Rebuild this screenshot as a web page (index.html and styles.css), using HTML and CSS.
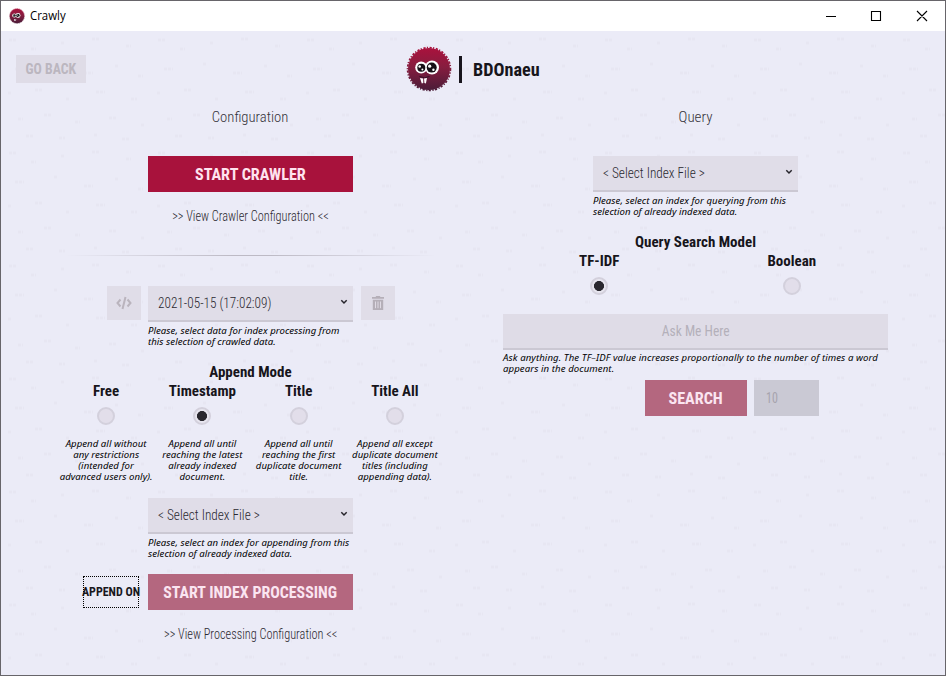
FILE: index.html
```html
<!DOCTYPE html>
<html lang="en">
<head>
<meta charset="utf-8">
<title>Crawly</title>
<link rel="stylesheet" href="styles.css">
</head>
<body>
<svg class="defs" width="0" height="0" aria-hidden="true">
  <defs>
    <linearGradient id="fur" x1="0" y1="0" x2="0" y2="1"><stop offset="0" stop-color="#aa123d"/><stop offset=".45" stop-color="#871d3f"/><stop offset="1" stop-color="#4b1c38"/></linearGradient>
    <symbol id="crawly" viewBox="0 0 46 46">
      <circle cx="23" cy="23" r="21" fill="url(#fur)"/>
      <circle cx="23" cy="23" r="21.4" fill="none" stroke="url(#fur)" stroke-width="1.8" stroke-dasharray="2.2 1.3 1.2 1.6"/>
      <circle cx="15.2" cy="21.5" r="6" fill="#fff"/><circle cx="26" cy="21.5" r="7" fill="#fff"/>
      <circle cx="15.3" cy="21.8" r="4" fill="#151016"/><circle cx="25.7" cy="21.6" r="5" fill="#151016"/>
      <circle cx="13.7" cy="20.5" r="1.3" fill="#fff"/><circle cx="16.4" cy="23.6" r="1" fill="#fff"/>
      <circle cx="23.7" cy="20.2" r="1.6" fill="#fff"/><circle cx="27.4" cy="23.7" r="1.2" fill="#fff"/>
      <path d="M13.5 30.5q5 2.500 10 0" fill="none" stroke="#351126" stroke-width="1"/>
      <path d="M14 32l3.200.4.1 4.600-1.500.5zM18 32.400l3-.4-1.100 5.400-1.500-.5z" fill="#fff"/>
    </symbol>
    <symbol id="chevron" viewBox="0 0 8 6"><path d="M1.300 1.300L4 4l2.700-2.700" fill="none" stroke="#26242b" stroke-width="1.500"/></symbol>
  </defs>
</svg>
<div class="window">
  <header class="titlebar">
    <svg class="app-icon"><use href="#crawly"/></svg>
    <span class="app-name">Crawly</span>
    <svg class="controls" viewBox="0 0 104 12"><path d="M0 6.500h10M45.500 1.500h9v9h-9zM91 1l10 10M101 1L91 11" fill="none" stroke="#000" stroke-width="1.100"/></svg>
  </header>
  <main class="app">
    <div class="top">
      <button class="back"><span>GO BACK</span></button>
      <div class="brand"><svg class="logo"><use href="#crawly"/></svg><i class="bar"></i><span class="brand-name">BDOnaeu</span></div>
    </div>
    <div class="columns">
      <section class="col">
        <h2><span class="t-config">Configuration</span></h2>
        <button class="primary"><span class="t-start">START CRAWLER</span></button>
        <a class="link"><span>&gt;&gt; View Crawler Configuration &lt;&lt;</span></a>
        <hr>
        <div class="data-row">
          <button class="icon-btn"><svg width="16" height="14" viewBox="0 0 16 14" fill="none" stroke="#bab4bd" stroke-width="2"><path d="M4.500 3.500L1.500 7l3 3.500M11.500 3.500l3 3.500-3 3.500M9.500 1l-3 12"/></svg></button>
          <div class="select"><span class="t-date">2021-05-15 (17:02:09)</span><svg class="chev"><use href="#chevron"/></svg></div>
          <button class="icon-btn"><svg width="12" height="14" viewBox="0 0 12 14"><path d="M0 1h3.500l.7-1h3.600l.7 1H12v1.700H0zM.8 3.700h10.400V14H.8z" fill="#b5afb8"/><path d="M3.500 5.500v6.700M6 5.500v6.700M8.500 5.500v6.700" stroke="#dfdae4"/></svg></button>
        </div>
        <p class="hint">Please, select data for index processing from<br>this selection of crawled data.</p>
        <h3><span>Append Mode</span></h3>
        <div class="radios">
          <div class="radio"><b>Free</b><i class="dot"></i><p>Append all without<br>any restrictions<br>(intended for<br>advanced users only).</p></div>
          <div class="radio"><b>Timestamp</b><i class="dot on"></i><p>Append all until<br>reaching the latest<br>already indexed<br>document.</p></div>
          <div class="radio"><b>Title</b><i class="dot"></i><p>Append all until<br>reaching the first<br>duplicate document<br>title.</p></div>
          <div class="radio"><b>Title All</b><i class="dot"></i><p>Append all except<br>duplicate document<br>titles (including<br>appending data).</p></div>
        </div>
        <div class="select"><span class="t-select">&lt; Select Index File &gt;</span><svg class="chev"><use href="#chevron"/></svg></div>
        <p class="hint">Please, select an index for appending from this<br>selection of already indexed data.</p>
        <div class="process-row">
          <button class="append"><span>APPEND ON</span></button>
          <button class="primary disabled"><span class="t-process">START INDEX PROCESSING</span></button>
        </div>
        <a class="link"><span>&gt;&gt; View Processing Configuration &lt;&lt;</span></a>
      </section>
      <section class="col">
        <h2><span>Query</span></h2>
        <div class="select"><span class="t-select">&lt; Select Index File &gt;</span><svg class="chev"><use href="#chevron"/></svg></div>
        <p class="hint">Please, select an index for querying from this<br>selection of already indexed data.</p>
        <h3><span>Query Search Model</span></h3>
        <div class="radios two">
          <div class="radio"><b>TF-IDF</b><i class="dot on"></i></div>
          <div class="radio"><b>Boolean</b><i class="dot"></i></div>
        </div>
        <div class="ask"><span class="t-ask">Ask Me Here</span></div>
        <p class="hint wide">Ask anything. The TF–IDF value increases proportionally to the number of times a word<br>appears in the document.</p>
        <div class="search-row">
          <button class="primary disabled search"><span class="t-search">SEARCH</span></button>
          <div class="count"><span class="t-count">10</span></div>
        </div>
      </section>
    </div>
  </main>
</div>
</body>
</html>
```

FILE: styles.css
```css
* { box-sizing: border-box; }
body { margin: 0; width: 946px; height: 676px; overflow: hidden; font-family: Roboto, "Liberation Sans", sans-serif; font-stretch: 75%; color: #17151b; }
.defs { position: absolute; }
span { display: inline-block; white-space: nowrap; }
button { border: 0; padding: 0; font: inherit; display: flex; align-items: center; justify-content: center; flex: none; }
h2, h3, p { margin: 0; }
.window { width: 946px; height: 676px; border: 1px solid #67656a; background: #fff; display: flex; flex-direction: column; }
.titlebar { height: 30px; flex: none; display: flex; align-items: center; padding: 0 17px 0 8px; }
.app-icon { width: 16px; height: 16px; }
.app-name { margin-left: 5px; font: 12px/16px "Open Sans", sans-serif; color: #000; transform: scaleX(.95); transform-origin: left; }
.controls { width: 104px; height: 12px; margin-left: auto; margin-right: -2px; }
.app {
  flex: 1; display: flex; flex-direction: column; background-color: #ebebf7;
  background-image: url("data:image/svg+xml,%3Csvg xmlns='http://www.w3.org/2000/svg' width='149' height='113'%3E%3Cpath d='M8 9h8M30 18h5M60 12h3M91 8h8M125 15h5M14 38h9M53 33h4M83 42h9M114 35h4M137 45h5M7 62h3M34 59h8M65 68h4M95 61h9M130 68h6M17 88h5M43 84h8M74 91h5M108 87h7M140 94h4M25 105h8M58 107h6M93 104h3M121 108h8' stroke='%23e0deea' stroke-width='3' opacity='.4' stroke-dasharray='3 1'/%3E%3C/svg%3E");
}
.top { height: 76px; flex: none; display: grid; grid-template-columns: 1fr auto 1fr; align-items: center; padding: 0 1px 0 15px; }
.back { width: 70px; height: 28px; background: #dfdce7; color: #bbb6bf; font-weight: 700; font-size: 14px; }
.back span { transform: scaleX(.98); }
.brand { display: flex; align-items: center; margin: 0 7.500px 0 -7.500px; }
.logo { width: 46px; height: 46px; }
.bar { width: 3px; height: 27px; margin: 0 11px 0 7px; background: #18151d; }
.brand-name { font-size: 18px; font-weight: 700; transform: scaleX(1.01); transform-origin: left; }
.columns { display: flex; gap: 60px; padding: 0 57px; }
.col { width: 385px; display: flex; flex-direction: column; align-items: center; }
h2 { height: 49px; line-height: 20px; font-size: 15px; font-weight: 350; color: #35333a; }
.t-config { transform: scaleX(.98); }
.primary { width: 205px; height: 36px; background: #a8123c; color: #ffe3ef; font-size: 17px; font-weight: 700; }
.t-start { transform: scaleX(.95); }
.t-process { transform: scaleX(.933); }
.t-search { transform: scaleX(.95); }
.disabled { background: #b4677f; color: #fbe5f1; }
.link { height: 20px; margin-top: 14px; line-height: 20px; font-size: 15px; font-weight: 300; color: #2b2930; }
.link span { transform: scaleX(.82); }
hr { width: 370px; height: 1px; border: 0; margin: 29px 0 30px; background: linear-gradient(90deg, transparent, #bdbac5 45%, #bdbac5 55%, transparent); }
.data-row { display: flex; gap: 7px; }
.data-row .select { margin-right: 1px; }
.icon-btn { width: 34px; height: 34px; background: #e0dde8; }
.select { width: 205px; height: 36px; flex: none; display: flex; justify-content: space-between; align-items: center; padding: 0 5px 0 10px; background: #e0dde8; border-bottom: 2px solid #cbc8d3; font-size: 15px; font-weight: 350; color: #2b2930; }
.select span { transform: scaleX(.885); transform-origin: left; }
.chev { width: 8px; height: 6px; margin-top: -2px; }
.hint { width: 205px; margin-top: 3px; font: italic 9.600px/11px "Noto Sans", sans-serif; letter-spacing: .05px; white-space: nowrap; color: #000; height: 22px; }
.wide { width: 385px; margin-top: 2px; margin-bottom: 1px; letter-spacing: .09px; }
h3 { margin-top: 15px; font-size: 15px; font-weight: 700; line-height: 20px; }
.radios { display: flex; width: 385px; height: 116px; }
.radio { flex: 1; display: flex; flex-direction: column; align-items: center; }
.radio b { font-size: 15px; line-height: 18px; height: 25px; white-space: nowrap; }
.dot { width: 18px; height: 18px; flex: none; border: 2px solid #d3d0dc; border-radius: 50%; background: #e2deea; }
.dot.on { background: radial-gradient(circle, #29272e 0 4.700px, #e7e5ef 5.300px); }
.radio p { margin-top: 13px; font: italic 9.600px/11px "Noto Sans", sans-serif; letter-spacing: .05px; text-align: center; white-space: nowrap; color: #000; }
.process-row { display: flex; gap: 9px; align-items: center; margin: 15px 65px 0 0; }
.append { width: 56px; height: 32px; border: 1px dotted #000; background: none; font-size: 12px; font-weight: 700; color: #19171d; }
.two { height: 62px; }
.ask { width: 385px; height: 36px; background: #dfdce7; border-bottom: 2px solid #cbc8d3; display: flex; align-items: center; justify-content: center; font-size: 15px; color: #b4b0ba; }
.t-ask { transform: scaleX(.9); }
.search-row { display: flex; gap: 7px; margin: 5px 0 0 73px; }
.search { width: 102px; }
.count { width: 65px; height: 36px; background: #cac9d4; color: #a6a3ad; font-size: 15px; display: flex; align-items: center; padding-left: 12px; }
.t-count { transform: scaleX(.8); transform-origin: left; }
```
